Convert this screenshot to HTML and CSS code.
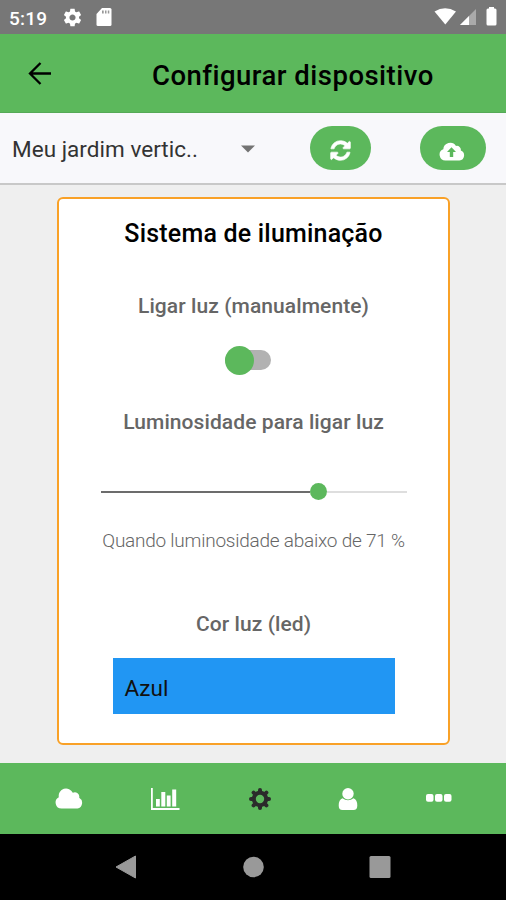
FILE: index.html
```html
<!DOCTYPE html>
<html lang="pt-BR">
<head>
<meta charset="utf-8">
<title>Configurar dispositivo</title>
<link rel="stylesheet" href="styles.css">
</head>
<body>
<div class="status">
  <span class="clock">5:19</span>
  <svg class="st-gear" width="21" height="21" viewBox="0 0 24 24"><path fill="#fff" d="M19.43 12.98c.04-.32.07-.64.07-.98s-.03-.66-.07-.98l2.11-1.65c.19-.15.24-.42.12-.64l-2-3.46c-.12-.22-.39-.3-.61-.22l-2.49 1c-.52-.4-1.08-.73-1.69-.98l-.38-2.65C14.46 2.18 14.25 2 14 2h-4c-.25 0-.46.18-.49.42l-.38 2.65c-.61.25-1.17.59-1.69.98l-2.49-1c-.23-.09-.49 0-.61.22l-2 3.46c-.13.22-.07.49.12.64l2.11 1.65c-.04.32-.07.65-.07.98s.03.66.07.98l-2.11 1.65c-.19.15-.24.42-.12.64l2 3.46c.12.22.39.3.61.22l2.49-1c.52.4 1.08.73 1.69.98l.38 2.65c.03.24.24.42.49.42h4c.25 0 .46-.18.49-.42l.38-2.65c.61-.25 1.17-.59 1.69-.98l2.49 1c.23.09.49 0 .61-.22l2-3.46c.12-.22.07-.49-.12-.64l-2.11-1.65zM12 15.5c-1.93 0-3.5-1.57-3.5-3.5s1.57-3.5 3.5-3.5 3.5 1.57 3.5 3.5-1.57 3.5-3.5 3.5z"/></svg>
  <svg class="st-sd" width="16" height="20" viewBox="0 0 16 20"><path fill="#fff" d="M6 1h8q1.500 0 1.500 1.500v15q0 1.500-1.500 1.500H2q-1.500 0-1.500-1.500V7z"/><path fill="#999" d="M6 3.500h1.700v3H6zM9 3.500h1.500v3H9zM11.800 3.500h1.500v3h-1.500z"/></svg>
  <span class="spacer"></span>
  <svg width="66" height="20" viewBox="0 0 66 20"><path fill="#fff" d="M.5 4.500Q11 -2 22 4.500L11.300 17.500z"/><path fill="#aaa" d="M42 2v16H26z"/><path fill="#fff" d="M35 9v9h-9z"/><path fill="#fff" d="M55 0h5v1.500h1q1.500 0 1.500 1.500v14q0 1.500-1.500 1.500h-7q-1.500 0-1.500-1.500V3q0-1.500 1.500-1.500h1z"/></svg>
</div>
<header class="appbar">
  <svg width="24" height="24" viewBox="0 0 24 24" fill="none" stroke="#000" stroke-width="2.300"><path d="M23 12.500H2M12.500 2L2 12.500L12.500 23"/></svg>
  <h1>Configurar dispositivo</h1>
</header>
<div class="toolbar">
  <span class="device">Meu jardim vertic..</span>
  <svg class="caret" width="14" height="8" viewBox="0 0 14 8"><path fill="#737373" d="M0 .5h14L7 7.500z"/></svg>
  <button class="pill refresh" aria-label="Atualizar"><svg width="23" height="23" viewBox="0 0 1792 1792"><path fill="#fff" stroke="#fff" stroke-width="50" d="M1639 1056q0 5-1 7-64 268-268 434.500t-478 166.500q-146 0-282.500-55t-243.500-157l-129 129q-19 19-45 19t-45-19-19-45v-448q0-26 19-45t45-19h448q26 0 45 19t19 45-19 45l-137 137q71 66 161 102t187 36q134 0 250-65t186-179q11-17 53-117 8-23 30-23h192q13 0 22.500 9.500t9.500 22.500zm25-800v448q0 26-19 45t-45 19h-448q-26 0-45-19t-19-45 19-45l138-138q-148-137-349-137-134 0-250 65t-186 179q-11 17-53 117-8 23-30 23h-199q-13 0-22.500-9.500t-9.500-22.500v-7q65-268 270-434.500t480-166.500q146 0 284 55.500t245 156.500l130-129q19-19 45-19t45 19 19 45z"/></svg></button>
  <button class="pill upload" aria-label="Enviar"><svg width="26" height="20" viewBox="0 0 26 20"><path fill="#fff" d="M6.500 19.500A5.800 5.800 0 0 1 4.300 8.300A6.900 6.900 0 0 1 17 4.900A4 4 0 0 1 21.800 9.500A5.200 5.200 0 0 1 20.500 19.500z"/><path fill="#5cb85c" d="M12.500 6.200L17 11h-2.800v5h-3.400v-5H8z"/></svg></button>
</div>
<main>
  <section class="card">
    <h2>Sistema de iluminação</h2>
    <h3 class="manual">Ligar luz (manualmente)</h3>
    <div class="switch"><span class="knob"></span></div>
    <h3 class="lum">Luminosidade para ligar luz</h3>
    <div class="slider"><span class="fill"></span><span class="dot"></span><span class="rest"></span></div>
    <p>Quando luminosidade abaixo de 71 %</p>
    <h3 class="cor">Cor luz (led)</h3>
    <div class="color">Azul</div>
  </section>
</main>
<nav class="tabs">
  <svg width="28" height="22" viewBox="0 0 28 22"><path fill="#fff" d="M6.500 20.500A6 6 0 0 1 3.800 9.200A7.400 7.400 0 0 1 17.800 4.800A4.500 4.500 0 0 1 24.200 9.800A5.800 5.800 0 0 1 22.500 20.500z"/></svg>
  <svg width="30" height="24" viewBox="0 0 30 24"><path fill="#fff" d="M1 1h1.800v20H29.500v2H1zM6 12h3.800v7.500H6zM11.300 5h4v14.500h-4zM16.800 8.500h3.800v11h-3.800zM22.200 2.500H26.200v17h-4z"/></svg>
  <svg class="tab-gear" width="24" height="24" viewBox="-12 -12 24 24" fill="none" stroke="#2b2b2b"><circle r="6.200" stroke-width="4"/><path stroke-width="4" stroke-linecap="round" d="M0-8v-1M0 8v1M-8 0h-1M8 0h1M5.600-5.600l.8-.8M-5.600 5.600l-.8.8M5.600 5.600l.8.8M-5.600-5.600l-.8-.8"/></svg>
  <svg width="20" height="24" viewBox="0 0 20 24"><path fill="#fff" d="M4.500 11.200Q7 13.300 10 13.300T15.500 11.200Q19.300 12.500 19.300 18.500Q19.300 23 15.500 23H4.500Q.7 23 .7 18.500Q.7 12.500 4.500 11.200z"/><circle fill="#fff" cx="10" cy="6.700" r="5.700"/></svg>
  <svg class="dots" width="28" height="10" viewBox="0 0 28 10" fill="#fff"><rect x="1" y="1" width="7.500" height="7.800" rx="2"/><rect x="10" y="1" width="7.500" height="7.800" rx="2"/><rect x="19" y="1" width="7.500" height="7.800" rx="2"/></svg>
</nav>
<footer class="sysnav">
  <svg width="22" height="24" viewBox="0 0 22 24"><path fill="#999" stroke="#999" stroke-linejoin="round" d="M1 12L20.500 1v22z"/></svg>
  <svg width="22" height="22" viewBox="0 0 22 22"><circle fill="#999" cx="11.500" cy="11" r="10.300"/></svg>
  <svg width="22" height="22" viewBox="0 0 22 22"><rect fill="#999" x=".5" width="21" height="22" rx="1.500"/></svg>
</footer>
</body>
</html>
```

FILE: styles.css
```css
* { box-sizing: border-box; }
body {
  margin: 0; width: 506px; height: 900px; overflow: hidden;
  display: flex; flex-direction: column;
  font-family: Roboto, sans-serif; background: #efefef; color: #000;
}
h1, h2, h3, p { margin: 0; white-space: nowrap; }
svg { display: block; flex: none; }
.status { height: 34px; flex: none; background: #777; display: flex; align-items: center; padding: 0 6px 0 9px; }
.clock { color: #fff; font-size: 19px; font-weight: 500; letter-spacing: .2px; width: 39px; padding-top: 2px; white-space: nowrap; }
.st-gear { margin-left: 14px; }
.st-sd { margin-left: 13px; }
.spacer { flex: 1; }
.appbar { height: 79px; flex: none; background: #5cb85c; display: flex; align-items: center; padding-left: 28px; border-bottom: 1px solid #55a957; }
.appbar h1 { margin-left: 100px; font-size: 27.5px; font-weight: 500; letter-spacing: .48px; padding-top: 5px; }
.toolbar { height: 72px; flex: none; background: #f8f8fb; border-bottom: 2px solid #c8c8c8; display: flex; align-items: center; padding-left: 12px; }
.device { width: 229px; padding-top: 2px; font-size: 22.5px; color: #333; letter-spacing: .03px; white-space: nowrap; }
.caret { flex: none; margin-top: 2px; }
.pill { border: 0; padding: 5px 0 0; height: 44px; border-radius: 22px; background: #5cb85c; display: flex; align-items: center; justify-content: center; }
.refresh { width: 61px; margin-left: 55px; }
.upload { width: 66px; margin-left: 49px; padding-right: 2px; }
main { flex: none; height: 578px; padding: 12px 56px 0 57px; }
.card { height: 548px; border: 2px solid #f9a127; border-radius: 6px; background: #fff; display: flex; flex-direction: column; align-items: center; }
.card h2 { font-size: 25px; line-height: 30px; font-weight: 500; letter-spacing: .2px; margin-top: 20px; }
.card h3 { font-size: 21px; line-height: 26px; font-weight: 500; letter-spacing: .08px; color: #666; }
.card .manual { margin-top: 44px; }
.switch { width: 46px; height: 20px; margin-top: 31px; margin-right: 11px; display: flex; align-items: center; background: #b2b2b2; border-radius: 10px; }
.knob { width: 29px; height: 29px; flex: none; border-radius: 50%; background: #5cb85c; }
.card .lum { margin-top: 39px; }
.slider { width: 306px; height: 17px; margin-top: 48px; display: flex; align-items: center; }
.fill { width: 209px; height: 2px; background: #6c6c6c; }
.dot { width: 17px; height: 17px; border-radius: 50%; background: #5cb85c; }
.rest { flex: 1; height: 2px; background: #dedede; }
.card p { margin-top: 29px; font-size: 19px; line-height: 24px; font-weight: 300; letter-spacing: -.24px; color: #666; }
.card .cor { margin-top: 58px; }
.color { width: 282px; height: 56px; margin-top: 21px; padding-left: 12px; background: #2196f3; font-size: 22.5px; line-height: 60px; color: #111; }
.tabs { height: 71px; flex: none; background: #5cb85c; display: flex; align-items: center; padding: 0 53px 0 55px; justify-content: space-between; }
.tab-gear { margin: 0 -1px 0 1px; }
.dots { margin-bottom: 2px; }
.sysnav { flex: 1; background: #000; display: flex; align-items: center; justify-content: space-between; padding: 0 115px; }
```
